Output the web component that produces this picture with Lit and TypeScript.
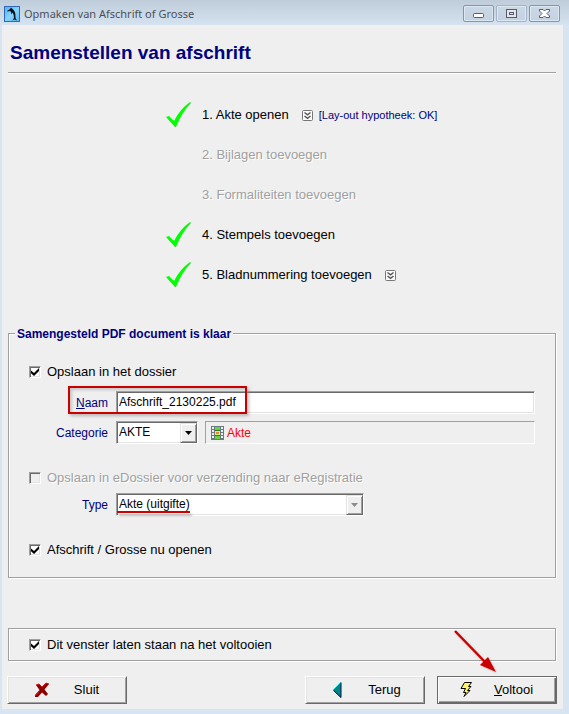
import { LitElement, html, css, svg, nothing } from "lit";
import { customElement, state } from "lit/decorators.js";

interface Step {
  label: string;
  done: boolean;
  more: boolean;
  note?: string;
}

const STEPS: Step[] = [
  { label: "1. Akte openen", done: true, more: true, note: "[Lay-out hypotheek: OK]" },
  { label: "2. Bijlagen toevoegen", done: false, more: false },
  { label: "3. Formaliteiten toevoegen", done: false, more: false },
  { label: "4. Stempels toevoegen", done: true, more: false },
  { label: "5. Bladnummering toevoegen", done: true, more: true },
];

const appIcon = html`<svg class="app-icon" viewBox="0 0 16 16" aria-hidden="true">
  <defs>
    <linearGradient id="sky" x1="0" y1="0" x2="1" y2="1">
      <stop offset="0" stop-color="#4fb0f2" />
      <stop offset="0.5" stop-color="#86d4fb" />
      <stop offset="1" stop-color="#5ab8f5" />
    </linearGradient>
  </defs>
  <rect x="0.5" y="0.5" width="15" height="15" fill="url(#sky)" stroke="#2f68b8" />
  <path d="M3 5 L6 3 L7 1.500 L8.500 3 Q11.500 5 11.500 10 L11.500 12 L13 14.500 L10.500 13.500 L8.500 14.500 L10 12 Q10 8.500 8.500 6.500 L7.500 8.500 L7 6 L6 5 L3.500 5.500 Z" fill="#10151c" />
</svg>`;

const checkIcon = html`<svg class="tick" viewBox="0 0 25 25" role="img" aria-label="Voltooid">
  <path d="M0 15 L3 14 L8 19 Q14 7 24 0 L25 1 Q16 10 10 25 L9 25 Z" fill="#00ff00" />
</svg>`;

const chevrons = html`<svg viewBox="0 0 11 11" aria-hidden="true">
  <rect x="0.5" y="0.5" width="10" height="10" rx="1" fill="#fafafa" stroke="#777" />
  <path d="M2.500 2.500 L5.500 4.800 L8.500 2.500 M2.500 6 L5.500 8.300 L8.500 6" fill="none" stroke="#555" stroke-width="1.400" />
</svg>`;

const crossIcon = html`<svg class="glyph" viewBox="0 0 16 16" aria-hidden="true">
  <path d="M2 3 L5 2 L8 5 L12 1 L15 2 L10.500 7.500 L14 12 L12 14 L8 10.500 L4 15 L1 15 L1 13 L5.500 8 Z" fill="#8b0000" />
  <path d="M2 3 L5 2 L8 5 L12 1 L15 2 M1 14 L5.500 9" fill="none" stroke="#e01010" />
</svg>`;

const backIcon = html`<svg class="glyph" viewBox="0 0 16 16" aria-hidden="true">
  <path d="M1 8 L9 0 L9 16 Z" fill="#008484" />
  <path d="M1 8 L9 0" stroke="#35dede" />
  <path d="M1.500 8.500 L9 15.500 L9 0.500" fill="none" stroke="#06104e" />
</svg>`;

const boltIcon = html`<svg class="glyph" viewBox="0 0 16 16" aria-hidden="true">
  <path d="M4.500 0.500 H11.500 L8.500 4.500 H11 L7.500 8.500 H10 L4 14.500 L6 10.500 H3.500 L5.500 6.500 H1 Z" fill="#fff36a" stroke="#000" />
</svg>`;

const categoryIcon = html`<svg class="category-icon" viewBox="0 0 14 14" aria-hidden="true">
  <rect width="13" height="14" fill="#6b7a80" />
  <path d="M1 1h2v2h-2zM1 4h2v2h-2zM1 7h2v2h-2zM1 10h2v2h-2zM10 1h2v2h-2zM10 4h2v2h-2zM10 7h2v2h-2zM10 10h2v2h-2z" fill="#eaf4ee" />
  <rect x="4" y="1" width="5" height="12" fill="#63d832" />
  <rect x="4" y="4" width="5" height="1" fill="#2f7a28" />
  <rect x="4" y="5" width="5" height="4" fill="#e6ee62" />
  <rect x="4" y="9" width="5" height="1" fill="#2f7a28" />
  <rect x="5" y="6" width="3" height="2" fill="#e08a3a" />
</svg>`;

const WINDOW_GLYPHS = {
  Minimaliseren: svg`<rect x="3.500" y="5.500" width="10" height="4" rx="1" fill="#fff" stroke="#555a6e" />`,
  Maximaliseren: svg`<rect x="3.500" y="1.500" width="10" height="8" fill="#e6e6e8" stroke="#555a6e" /><rect x="6.500" y="4.500" width="4" height="2" fill="#cfe0f2" stroke="#555a6e" />`,
  Sluiten: svg`<path d="M3.500 1.500 H7 L8.500 3 L10 1.500 H13.500 V3 L11 5.500 L13.500 8 V9.500 H10 L8.500 8 L7 9.500 H3.500 V8 L6 5.500 L3.500 3 Z" fill="#fff" stroke="#555a6e" />`,
};

@customElement("app-root")
export class AppRoot extends LitElement {
  @state() private saveInFile = true;
  @state() private openNow = true;
  @state() private keepOpen = true;

  static styles = css`
    :host {
      display: block;
      box-sizing: border-box;
      min-height: 100vh;
      padding: 0 6px 5px 2px;
      background: #d7e4f2;
      font: 13px/16px "Liberation Sans", Arial, sans-serif;
      color: #000;
    }
    * { box-sizing: border-box; }
    button, input, select { font: inherit; color: inherit; margin: 0; border-radius: 0; }

    .titlebar {
      display: flex;
      align-items: center;
      gap: 4px;
      height: 25px;
      margin: 0 -6px 0 -2px;
      padding: 2px 9px 0 4px;
      background: linear-gradient(#bfcddb, #d5e2f0);
    }
    .app-icon { width: 16px; height: 16px; }
    .title {
      flex: 1;
      font: 11px/16px "Noto Sans", "Open Sans", sans-serif;
      color: #4b5058;
    }
    .window-buttons { display: flex; gap: 2px; }
    .window-button {
      display: grid;
      place-items: center;
      width: 31px;
      height: 17px;
      padding: 0;
      border: 1px solid #8494b4;
      border-radius: 2px;
      background: linear-gradient(#cbd8e6, #c3d1e1);
      box-shadow: inset 0 0 0 1px #dce7f2;
    }
    .window-button svg { width: 17px; height: 11px; }
    .window-button.soft { border-color: #a5b4c8; }

    .content { padding: 0 6px 5px 5px; background: #efefef; }
    .heading {
      margin: 0 1px;
      padding: 16px 2px 7px;
      border-bottom: 1px solid #a0a0a0;
      box-shadow: 0 1px #fff;
      font-size: 19px;
      line-height: 24px;
      color: #000080;
    }

    .steps { margin: 22px 0 0; padding: 0 0 0 159px; list-style: none; }
    .step { display: flex; align-items: center; height: 40px; }
    .mark { width: 36px; height: 26px; flex: none; }
    .tick { display: block; width: 25px; height: 25px; }
    .pending, .disabled { color: #a0a0a0; text-shadow: 1px 1px #fff; }
    .more { width: 11px; height: 11px; margin-left: 13px; padding: 0; border: 0; background: none; }
    .more svg { display: block; }
    .note { margin-left: 6px; font-size: 11px; color: #000080; }

    .group {
      min-width: 0;
      margin: 31px 1px 0;
      padding: 21px 20px 17px;
      border: 1px solid #a0a0a0;
      box-shadow: 1px 1px #fff, inset 1px 1px #fff;
    }
    .legend {
      margin-left: -14px;
      padding: 1px 2px 0;
      background: #efefef;
      font-size: 12px;
      line-height: 14px;
      font-weight: bold;
      color: #000080;
    }
    .option { display: flex; align-items: center; gap: 6px; height: 20px; }
    .box {
      appearance: none;
      display: grid;
      place-items: center;
      flex: none;
      width: 12px;
      height: 12px;
      border: 1px solid;
      border-color: #a0a0a0 #fff #fff #a0a0a0;
      background: #fff;
      box-shadow: inset 1px 1px #696969, inset -1px -1px #e3e3e3;
    }
    .box:checked::before {
      content: "";
      width: 8px;
      height: 8px;
      background: #000;
      clip-path: polygon(0 30%, 38% 62%, 100% 0, 100% 38%, 38% 100%, 0 66%);
    }
    .box:disabled { background: #efefef; }

    .fields { display: grid; gap: 7px; margin-top: 9px; }
    .fields.second { margin: 5px 0 24px; }
    .spaced { margin-top: 24px; }
    .row {
      position: relative;
      display: grid;
      grid-template-columns: 79px minmax(0, 1fr);
      column-gap: 8px;
      align-items: center;
      font-size: 12px;
    }
    .caption { text-align: right; color: #000080; }
    .text, .pick {
      appearance: none;
      width: 100%;
      height: 23px;
      padding: 0 2px 2px;
      border: 1px solid;
      border-color: #a0a0a0 #fff #fff #a0a0a0;
      outline: 0;
      background: #fff;
      box-shadow: inset 1px 1px #696969, inset -1px -1px #e3e3e3;
    }
    .pick { opacity: 1; color: #000; }
    .drop { position: relative; width: 82px; }
    .drop.wide { width: 248px; }
    .arrow {
      position: absolute;
      top: 2px;
      right: 1px;
      bottom: 1px;
      display: grid;
      place-items: center;
      width: 17px;
      border: 1px solid;
      border-color: #e3e3e3 #696969 #696969 #e3e3e3;
      background: #efefef;
      box-shadow: inset 1px 1px #fff, inset -1px -1px #a0a0a0;
      pointer-events: none;
    }
    .arrow svg { width: 7px; height: 4px; fill: #000; }
    .wide .arrow svg { fill: #8c8c8c; }
    .pair { display: flex; gap: 7px; }
    .category {
      display: flex;
      flex: 1;
      align-items: center;
      gap: 2px;
      height: 23px;
      padding-left: 5px;
      border: 1px solid;
      border-color: #a0a0a0 #fff #fff #a0a0a0;
      color: #f00;
    }
    .category-icon { width: 14px; height: 14px; }

    .highlight {
      position: absolute;
      left: 39px;
      top: -5px;
      width: 179px;
      height: 28px;
      border: 2px solid #c80000;
      box-shadow: 2px 2px 3px #8888, inset 2px 2px 3px #8886;
      pointer-events: none;
    }
    .underline {
      position: absolute;
      left: 1px;
      top: 18px;
      width: 73px;
      height: 2px;
      background: #d00000;
      box-shadow: 2px 3px 2px #8888;
      pointer-events: none;
    }

    .keep {
      margin: 50px 1px 0;
      padding: 6px 20px 5px;
      border: 1px solid #a0a0a0;
      box-shadow: 1px 1px #fff, inset 1px 1px #fff;
    }
    .actions { display: flex; gap: 12px; margin-top: 15px; }
    .push {
      display: flex;
      align-items: center;
      width: 120px;
      height: 28px;
      padding: 0 3px 0 26px;
      border: 1px solid;
      border-color: #fff #696969 #696969 #fff;
      background: #efefef;
      box-shadow: inset 1px 1px #e3e3e3, inset -1px -1px #a0a0a0;
    }
    .push.first { margin-right: auto; }
    .push.default {
      padding: 0 5px 0 22px;
      border-color: #696969;
      box-shadow: inset 1px 1px #fff, inset -1px -1px #696969, inset -2px -2px #a0a0a0;
    }
    .glyph { width: 16px; height: 16px; flex: none; }
    .push-label { flex: 1; text-align: center; }
    .target { position: relative; }
    .pointer {
      position: absolute;
      left: 16px;
      top: -47px;
      width: 44px;
      height: 44px;
      filter: drop-shadow(1px 1px 1px #8886);
      pointer-events: none;
    }
  `;

  private arrow() {
    return html`<span class="arrow"><svg viewBox="0 0 7 4" aria-hidden="true"><path d="M0 0H7L3.500 4Z" /></svg></span>`;
  }

  private renderStep(step: Step) {
    return html`<li class="step">
      <span class="mark">${step.done ? checkIcon : nothing}</span>
      <span class=${step.done ? "done" : "pending"}>${step.label}</span>
      ${step.more ? html`<button class="more" type="button" aria-label="Meer">${chevrons}</button>` : nothing}
      ${step.note ? html`<span class="note">${step.note}</span>` : nothing}
    </li>`;
  }

  render() {
    return html`
      <header class="titlebar">
        ${appIcon}
        <span class="title">Opmaken van Afschrift of Grosse</span>
        <span class="window-buttons">
          ${Object.entries(WINDOW_GLYPHS).map(
            ([name, glyph]) => html`<button class="window-button ${name === "Maximaliseren" ? "soft" : ""}" type="button" aria-label=${name}>
              <svg viewBox="0 0 17 11" aria-hidden="true">${glyph}</svg>
            </button>`
          )}
        </span>
      </header>
      <main class="content">
        <h1 class="heading">Samenstellen van afschrift</h1>
        <ul class="steps">${STEPS.map((s) => this.renderStep(s))}</ul>

        <fieldset class="group">
          <legend class="legend">Samengesteld PDF document is klaar</legend>
          <label class="option">
            <input class="box" type="checkbox" .checked=${this.saveInFile}
              @change=${(e: Event) => (this.saveInFile = (e.target as HTMLInputElement).checked)} />
            Opslaan in het dossier
          </label>
          <div class="fields">
            <div class="row">
              <label class="caption" for="naam"><u>N</u>aam</label>
              <input class="text" id="naam" type="text" value="Afschrift_2130225.pdf" />
              <span class="highlight"></span>
            </div>
            <div class="row">
              <label class="caption" for="categorie">Categorie</label>
              <div class="pair">
                <div class="drop">
                  <select class="pick" id="categorie"><option>AKTE</option></select>
                  ${this.arrow()}
                </div>
                <div class="category">${categoryIcon}<span>Akte</span></div>
              </div>
            </div>
          </div>
          <label class="option spaced disabled">
            <input class="box" type="checkbox" disabled />
            Opslaan in eDossier voor verzending naar eRegistratie
          </label>
          <div class="fields second">
            <div class="row">
              <label class="caption" for="type">Type</label>
              <div class="drop wide">
                <select class="pick" id="type" disabled><option>Akte (uitgifte)</option></select>
                ${this.arrow()}
                <span class="underline"></span>
              </div>
            </div>
          </div>
          <label class="option">
            <input class="box" type="checkbox" .checked=${this.openNow}
              @change=${(e: Event) => (this.openNow = (e.target as HTMLInputElement).checked)} />
            Afschrift / Grosse nu openen
          </label>
        </fieldset>

        <div class="keep">
          <label class="option">
            <input class="box" type="checkbox" .checked=${this.keepOpen}
              @change=${(e: Event) => (this.keepOpen = (e.target as HTMLInputElement).checked)} />
            Dit venster laten staan na het voltooien
          </label>
        </div>

        <div class="actions">
          <button class="push first" type="button">${crossIcon}<span class="push-label">Sluit</span></button>
          <button class="push" type="button">${backIcon}<span class="push-label">Terug</span></button>
          <div class="target">
            <button class="push default" type="button">${boltIcon}<span class="push-label"><u>V</u>oltooi</span></button>
            <svg class="pointer" viewBox="0 0 44 44" aria-hidden="true">
              <path d="M2 2 L32 33" stroke="#cc0000" stroke-width="2.500" />
              <path d="M43 43 L27 36 L35 28 Z" fill="#cc0000" />
            </svg>
          </div>
        </div>
      </main>
    `;
  }
}
